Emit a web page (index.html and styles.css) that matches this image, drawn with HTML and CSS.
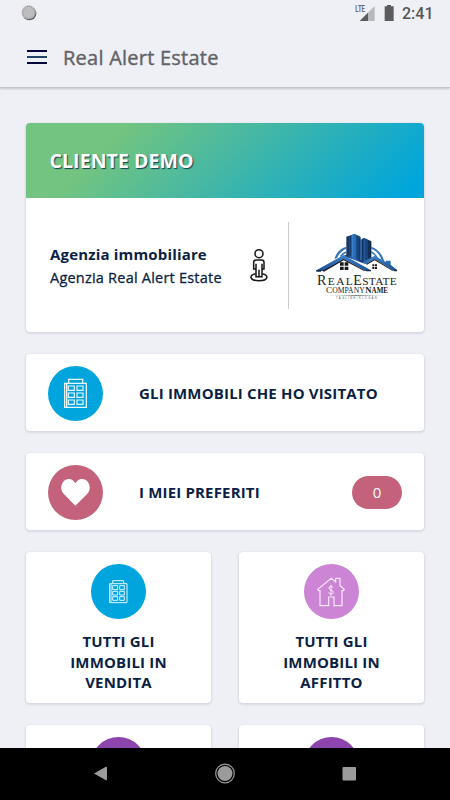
FILE: index.html
```html
<!DOCTYPE html>
<html lang="it">
<head>
<meta charset="utf-8">
<title>Real Alert Estate</title>
<link rel="stylesheet" href="styles.css">
</head>
<body>
<div class="screen">
  <header class="top">
    <div class="status">
      <svg class="spinner" width="16" height="16" viewBox="0 0 48 48"><circle cx="25" cy="25" r="21" fill="#555"/><circle cx="23" cy="22" r="21" fill="#bdbdbf"/><circle cx="23" cy="22" r="18" fill="none" stroke="#8f8f92" stroke-width="3" stroke-dasharray="3 3"/></svg>
      <div class="indicators">
        <svg width="57" height="20" viewBox="0 0 171 60">
          <text x="1" y="24" class="lte" textLength="29" lengthAdjust="spacingAndGlyphs">LTE</text>
          <path d="M14 51L59 6V51Z" fill="#b8b8bc"/><path d="M14 51L39 26V51Z" fill="#5c5c5e"/>
          <path d="M96 3h12v4h8v44H89V7h7z" fill="#5c5c5e"/>
        </svg>
        <span class="clock">2:41</span>
      </div>
    </div>
    <div class="toolbar">
      <div class="menu"><i></i><i></i><i></i></div>
      <h1>Real Alert Estate</h1>
    </div>
  </header>

  <main>
    <section class="card client">
      <div class="banner">CLIENTE DEMO</div>
      <div class="agency">
        <div class="agency-text">
          <strong>Agenzia immobiliare</strong>
          <span>Agenzia Real Alert Estate</span>
        </div>
        <svg class="person" width="20" height="36" viewBox="58 112 60 108" fill="none" stroke="#161616" stroke-width="4.500">
          <circle cx="88" cy="132" r="12"/>
          <path d="M80 151H96Q103 151 103 158V178H97V201H79V178H72V158Q72 151 80 151ZM79 162V180M97 162V180M88 180V201"/>
          <path d="M78 192C57 196 59 213 88 213S118 196 98 192"/>
        </svg>
        <div class="rule"></div>
        <svg class="logo" width="110" height="90" viewBox="0 0 330 270">
          <defs>
            <linearGradient id="roof" x1="0" y1="0" x2="0" y2="1"><stop offset="0" stop-color="#3b83cc"/><stop offset="1" stop-color="#1d5296"/></linearGradient>
            <linearGradient id="tower"><stop offset="0" stop-color="#0c1a33"/><stop offset=".25" stop-color="#245a9c"/><stop offset=".4" stop-color="#2c70bd"/><stop offset=".62" stop-color="#153b70"/><stop offset=".8" stop-color="#245ea5"/><stop offset="1" stop-color="#0a1830"/></linearGradient>
            <linearGradient id="line"><stop offset="0" stop-color="#999" stop-opacity="0"/><stop offset=".5" stop-color="#555"/><stop offset="1" stop-color="#999" stop-opacity="0"/></linearGradient>
          </defs>
          <path d="M103 117Q112 87 139 80V86Q120 94 111 114ZM119 110Q125 98 139 94V99Q130 103 126 109ZM214 80Q244 91 253 124L245 121Q236 94 214 86ZM214 93Q230 102 236 118L229 115Q223 103 214 99Z" fill="#3676b8"/>
          <path d="M139 50L164 41L182 51V60L192 53L214 64V120L196 132L131 108L139 104Z" fill="url(#tower)"/>
          <path d="M145 50V106M151 48V108M171 46V116M177 50V118M188 56V124M198 57V127M205 61V120" stroke="#0c2448" stroke-width="2"/>
          <path d="M158 44V112M183 59V120" stroke="#3f86d2" stroke-width="3"/>
          <path d="M131 108L56 149V155H208V140ZM224 110L198 128V152H286Z" fill="#fff"/>
          <path d="M188 126L224 107L258 126V122H272V134L291 150H278L224 117L198 132Z" fill="url(#roof)"/>
          <path d="M49 151L131 105L213 151H194L131 116L66 153H49Z" fill="url(#roof)"/>
          <path d="M66 152L131 116L194 151V154L131 121L72 155ZM224 117L278 150V153L224 121L201 134L198 132Z" fill="#182033"/>
          <path d="M49 150H66L62 155H49ZM193 150H213V154H199ZM277 149H291V154H283Z" fill="#16294c"/>
          <path d="M120 127h11v10h-11zM134 127h11v10h-11zM120 140h11v10h-11zM134 140h11v10h-11zM217 133h6v6h-6zM225 133h6v6h-6zM217 141h6v6h-6zM225 141h6v6h-6z" fill="#17191c"/>
          <text x="51" y="195" class="brand" textLength="107"><tspan font-size="42">R</tspan>EAL</text>
          <text x="160" y="195" class="brand" textLength="130"><tspan font-size="42">E</tspan>STATE</text>
          <text x="78" y="219" class="sub" textLength="116" lengthAdjust="spacingAndGlyphs"><tspan font-size="27">C</tspan>OMPANY</text>
          <text x="196" y="219" class="sub" font-weight="bold" textLength="68" lengthAdjust="spacingAndGlyphs"><tspan font-size="27">N</tspan>AME</text>
          <path d="M82 225H260V227H82Z" fill="url(#line)"/>
          <text x="108" y="237" class="tagline" textLength="122">TAGLINE/SLOGAN</text>
        </svg>
      </div>
    </section>

    <section class="card row">
      <div class="disc blue">
        <svg width="55" height="55" viewBox="24 34 165 165" fill="none" stroke="#e8f8ff" stroke-width="4">
          <path d="M74 86H139V158H74ZM86 85V74H128V85M80 86V157"/><path d="M85 94h18v13H85zM111 94h18v13H111zM85 115h18v13H85zM111 115h18v13H111zM85 136h18v13H85zM111 136h18v13H111z" stroke-width="3.500"/>
        </svg>
      </div>
      <span class="label">GLI IMMOBILI CHE HO VISITATO</span>
    </section>

    <section class="card row">
      <div class="disc rose">
        <svg width="55" height="55" viewBox="24 29 165 165"><path d="M106 151L71 115C58 101 64 80 77 73C88 68 99 71 106 84C113 71 125 68 136 73C149 80 155 101 142 115Z" fill="#fff"/></svg>
      </div>
      <span class="label">I MIEI PREFERITI</span>
      <span class="count">0</span>
    </section>

    <div class="grid">
      <section class="card tile">
        <div class="disc blue">
          <svg width="55" height="55" viewBox="213 56 165 165" fill="none" stroke="#e0f5ff" stroke-width="3">
            <path d="M269 115H321V172H269ZM278 114V106H311V114M273 116V171"/><path d="M278 121h15v12h-15zM299 121h14v12h-14zM278 138h15v11h-15zM299 138h14v11h-14zM278 154h15v11h-15zM299 154h14v11h-14z"/>
          </svg>
        </div>
        <span class="label">TUTTI GLI IMMOBILI IN VENDITA</span>
      </section>
      <section class="card tile">
        <div class="disc pink">
          <svg width="55" height="55" viewBox="207 56 165 165" fill="none" stroke="#faeafd" stroke-width="3.500">
            <path d="M248 132L289 99L302 110V99H315V121L328 132L325 136H321V181H297V155H281V181H255V136H251Z"/><path d="M294 127Q293 123 288 123Q282 123 282 128Q282 132 288 134Q295 136 295 141Q295 146 288 146Q282 146 281 141M288 118V151" stroke-width="3"/>
          </svg>
        </div>
        <span class="label">TUTTI GLI IMMOBILI IN AFFITTO</span>
      </section>
      <section class="card tile"><div class="disc purple"></div></section>
      <section class="card tile"><div class="disc purple"></div></section>
    </div>
  </main>

  <nav class="navbar">
    <svg width="450" height="52" viewBox="0 0 450 52" fill="#9b9b9b">
      <path d="M94 25.5L105.500 19Q107 18.300 107 20V31Q107 32.800 105.500 32Z"/>
      <circle cx="225" cy="25.500" r="7.500"/><circle cx="225" cy="25.500" r="9.300" fill="none" stroke="#9b9b9b" stroke-width="1.200"/>
      <rect x="342.500" y="19" width="13.500" height="13.500" rx="1"/>
    </svg>
  </nav>
</div>
</body>
</html>
```
FILE: styles.css
```css
* { box-sizing: border-box; }
body { margin: 0; font-family: "Open Sans", sans-serif; color: #0b1f45; }
.screen { width: 450px; height: 800px; display: flex; flex-direction: column; overflow: hidden; background: #eff0f6; }
.top { flex: none; height: 88px; border-bottom: 1px solid #c3c3c9; box-shadow: 0 1px 2px rgba(0,0,0,.18); }
.status { height: 28px; padding: 0 17px 0 20.500px; display: flex; justify-content: space-between; }
.spinner { margin-top: 5px; }
.indicators { display: flex; }
.indicators svg { margin: 4px -10px 0 0; flex: none; }
.lte { font: bold 25px Roboto, sans-serif; fill: #666; }
.clock { font: 500 16px/28px Roboto, sans-serif; color: #555; width: 31px; }
.toolbar { display: flex; align-items: center; height: 58px; padding-left: 27px; gap: 16px; }
.menu { width: 20px; display: flex; flex-direction: column; gap: 4px; }
.menu i { height: 2px; background: #06063a; }
.menu i:nth-child(2) { background: #214264; }
h1 { margin: 0; font-size: 20px; font-weight: 400; letter-spacing: .24px; color: #636367; -webkit-text-stroke: .4px #636367; }
main { flex: 1; min-height: 0; overflow: hidden; padding: 35px 26px 0; display: flex; flex-direction: column; gap: 22px; }
.card { background: #fff; border-radius: 4px; box-shadow: 0 1px 2px 1px rgba(80,80,110,.14); flex: none; }
.client { height: 209px; overflow: hidden; }
.banner { height: 75px; padding-left: 23.500px; line-height: 76px; font-size: 19.500px; letter-spacing: .08px; font-weight: 700; color: #fff; text-shadow: 1px 1px 1px #173e54; background: linear-gradient(135deg, #72c480 22%, #00a5dc 95%); }
.agency { display: flex; align-items: flex-start; }
.agency-text { display: flex; flex-direction: column; width: 223px; padding: 44px 0 0 24px; line-height: 24px; white-space: nowrap; font-size: 14.500px; letter-spacing: .22px; font-weight: 400; }
.agency-text span { -webkit-text-stroke: .3px #0b1f45; }
.agency-text strong { font-size: 15px; font-weight: 700; letter-spacing: .17px; }
.person { margin-top: 49px; flex: none; }
.rule { width: 1px; height: 87px; margin: 24px 0 0 19px; background: #ccc; }
.logo { margin: 22px 0 0 11px; flex: none; }
.brand { font: 34px "Liberation Serif", serif; fill: #222; }
.sub { font-family: "Liberation Serif", serif; font-size: 22px; fill: #222; }
.tagline { font: 8px "Liberation Sans", sans-serif; fill: #555; }
.row { height: 77px; display: flex; align-items: center; padding: 2px 22px 0; }
.disc { width: 55px; height: 55px; border-radius: 50%; flex: none; }
.disc svg { display: block; }
.blue { background: #00a5de; }
.rose { background: #c3627a; }
.pink { background: #cc84d4; }
.purple { background: #8e44ad; }
.label { font-size: 15px; font-weight: 700; letter-spacing: .17px; white-space: nowrap; }
.row .label { margin: -2px 0 0 36px; }
.count { margin-left: auto; width: 50px; height: 33px; border-radius: 17px; background: #c3627a; color: #fff; font-size: 15px; line-height: 33px; text-align: center; }
.grid { display: grid; grid-template-columns: 185px 185px; column-gap: 28px; row-gap: 22px; }
.tile { height: 151px; padding-top: 12px; display: flex; flex-direction: column; align-items: center; }
.tile .label { margin-top: 12px; width: 110px; line-height: 20.500px; text-align: center; white-space: normal; }
.navbar { flex: none; height: 52px; background: #000; }
.navbar svg { display: block; }
```
